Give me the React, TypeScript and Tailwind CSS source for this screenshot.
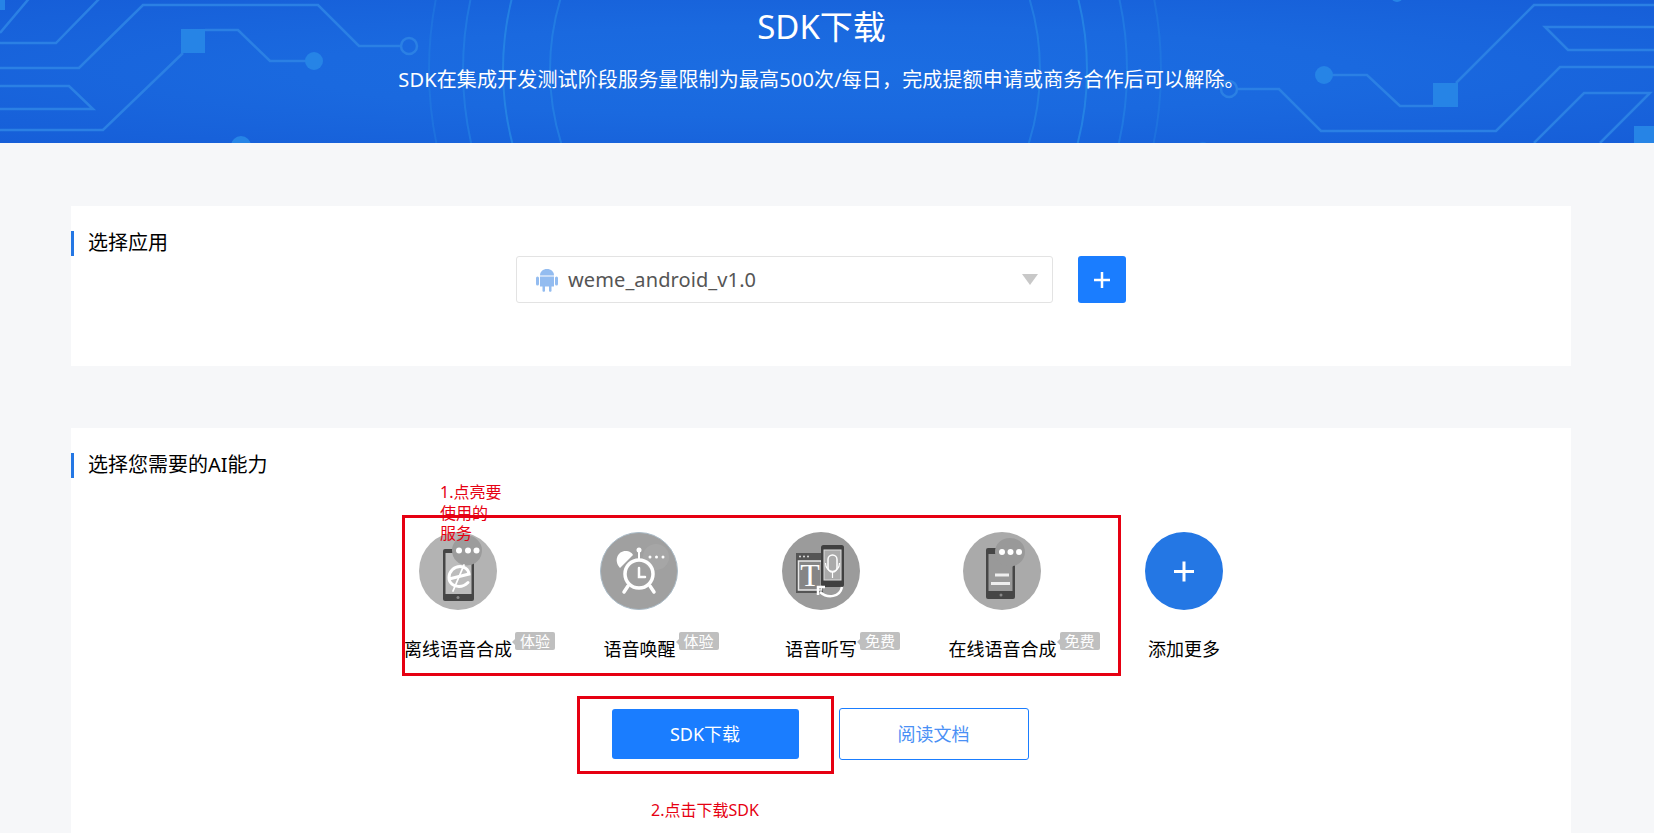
const CIRCUIT = "#2b80e4";

function BannerArt() {
  return (
    <svg className="absolute inset-0 h-full w-full" viewBox="0 0 1654 143" fill="none" aria-hidden="true">
      <g stroke="#2a8de6" strokeOpacity="0.55" strokeWidth="2">
        <circle cx="795" cy="70" r="245" />
        <circle cx="795" cy="70" r="292" strokeOpacity="0.7" />
        <circle cx="795" cy="70" r="332" strokeOpacity="0.45" />
        <circle cx="795" cy="70" r="366" strokeOpacity="0.3" />
      </g>
      <g stroke={CIRCUIT} strokeWidth="2.500">
        <path d="M0 68H79L143 5H318L359 46H401" />
        <circle cx="409" cy="46" r="8" />
        <path d="M0 43H56L100 -2" />
        <path d="M0 33L32 -5" />
        <path d="M205 30H238L270 61H307" />
        <path d="M183 53L103 130H0" />
        <path d="M0 86H69L93 109H0" />
        <circle cx="1229" cy="89" r="8" />
        <path d="M1237 89H1279L1321 131H1496L1560 67H1654" />
        <path d="M1324 75H1367L1400 106H1433" />
        <path d="M1456 83L1534 5H1654" />
        <path d="M1654 27H1545L1568 50H1654" />
        <path d="M1534 143L1584 93H1650L1600 143" />
      </g>
      <g fill="#2684e6">
        <rect x="181" y="29" width="24" height="24" />
        <circle cx="314" cy="61" r="9" />
        <circle cx="241" cy="146" r="10" />
        <rect x="0" y="0" width="5" height="10" />
        <circle cx="1324" cy="75" r="9" />
        <rect x="1433" y="83" width="25" height="24" />
        <rect x="1634" y="126" width="20" height="17" />
        <circle cx="1397" cy="-4" r="6" />
        <circle cx="1203" cy="150" r="8" fillOpacity="0.5" />
      </g>
    </svg>
  );
}

function AndroidIcon() {
  return (
    <svg width="22" height="24" viewBox="0 0 22 24" fill="#93bcf0" aria-hidden="true">
      <path d="M4 7.500C4 3.500 7 1 11 1C15 1 18 3.500 18 7.500Z" />
      <path d="M4 8.500H18V18.500H15.500V23C15.500 24 13 24 13 23V18.500H9V23C9 24 6.500 24 6.500 23V18.500H4Z" />
      <rect x="0" y="8.500" width="3" height="9" rx="1.500" />
      <rect x="19" y="8.500" width="3" height="9" rx="1.500" />
    </svg>
  );
}

function OfflineIcon() {
  return (
    <svg width="78" height="78" viewBox="0 0 78 78" aria-hidden="true">
      <circle cx="39" cy="39" r="39" fill="#b3b3b3" />
      <rect x="24" y="17" width="31" height="52" rx="2" fill="#464646" />
      <rect x="26.500" y="21" width="26" height="41" fill="#bcbcbc" />
      <circle cx="39" cy="65.500" r="1.500" fill="#8a8a8a" />
      <circle cx="48" cy="18.500" r="15" fill="#9c9c9c" />
      <circle cx="40" cy="18.500" r="3" fill="#fff" />
      <circle cx="49" cy="18.500" r="3" fill="#fff" />
      <circle cx="57.500" cy="18.500" r="3" fill="#fff" />
      <g fill="none" stroke="#fff" strokeWidth="3" strokeLinecap="round">
        <path d="M30 47L50 42C49.500 37 45 34.500 41 34.500C35 34.500 30 39.500 30 45.500C30 51 34.500 54.500 40 54.500C43.500 54.500 46.500 53 49 50.500" />
        <path d="M34 59L45 33" strokeWidth="1.800" />
      </g>
    </svg>
  );
}

function AlarmIcon() {
  return (
    <svg width="78" height="78" viewBox="0 0 78 78" aria-hidden="true">
      <circle cx="39" cy="39" r="38.500" fill="#a0a0a0" stroke="#a9bac6" strokeWidth="1" />
      <circle cx="56" cy="25" r="13" fill="#a6a6a6" />
      <circle cx="50" cy="25" r="1.500" fill="#fff" />
      <circle cx="56.500" cy="25" r="1.500" fill="#fff" />
      <circle cx="63" cy="25" r="1.500" fill="#fff" />
      <g fill="none" stroke="#fff" strokeWidth="3.500" strokeLinecap="round">
        <circle cx="39" cy="42" r="14" />
        <path d="M39 20V27" strokeWidth="2" />
        <path d="M39 36V45H45" strokeWidth="2.500" />
        <path d="M28 54L24 60" />
        <path d="M50 54L54 60" />
      </g>
      <circle cx="39" cy="18" r="2.500" fill="#fff" />
      <path d="M20 36C13 28 18 18 27 19C30 19.500 32 21 33 23Z" fill="#fff" />
    </svg>
  );
}

function DictationIcon() {
  return (
    <svg width="78" height="78" viewBox="0 0 78 78" aria-hidden="true">
      <circle cx="39" cy="39" r="39" fill="#9b9b9b" />
      <rect x="14" y="21" width="27" height="40" fill="#555" />
      <circle cx="18" cy="24.500" r="1" fill="#ddd" />
      <circle cx="22" cy="24.500" r="1" fill="#ddd" />
      <circle cx="26" cy="24.500" r="1" fill="#ddd" />
      <rect x="16.500" y="29" width="23" height="29" fill="#858585" stroke="#e8e8e8" strokeWidth="1.500" />
      <text x="28" y="54" textAnchor="middle" fontFamily="'Liberation Serif', serif" fontSize="32" fill="#fff">
        T
      </text>
      <rect x="39" y="13" width="23" height="42" rx="2.500" fill="#404040" />
      <rect x="42" y="18" width="17" height="30" fill="#aaa" stroke="#ddd" strokeWidth="1" />
      <rect x="46" y="23" width="9" height="17" rx="4.500" fill="none" stroke="#fff" strokeWidth="1.500" />
      <path d="M43.500 31C43.500 42 57.500 42 57.500 31M50.500 40V46" fill="none" stroke="#fff" strokeWidth="1.200" />
      <g fill="none" stroke="#fff" strokeWidth="2.500">
        <path d="M60 55C58 65 46 67 38 60" />
        <path d="M43 55H36V63" />
      </g>
    </svg>
  );
}

function OnlineIcon() {
  return (
    <svg width="78" height="78" viewBox="0 0 78 78" aria-hidden="true">
      <circle cx="39" cy="39" r="39" fill="#aaaaaa" />
      <rect x="23" y="16" width="29" height="51" rx="2" fill="#464646" />
      <rect x="25.500" y="22" width="24" height="37" fill="#999" />
      <circle cx="38" cy="63" r="1.500" fill="#888" />
      <path d="M47 6C38.500 6 32 12 32 20C32 28 38.500 34 45 34L47 37L50 34C56.500 33 62 27 62 20C62 12 55.500 6 47 6Z" fill="#999" />
      <circle cx="39" cy="20" r="3" fill="#fff" />
      <circle cx="47.500" cy="20" r="3" fill="#fff" />
      <circle cx="56" cy="20" r="3" fill="#fff" />
      <rect x="32" y="41.500" width="14" height="3" fill="#eee" />
      <rect x="28" y="50" width="19" height="3" fill="#eee" />
    </svg>
  );
}

function AddIcon() {
  return (
    <svg width="78" height="78" viewBox="0 0 78 78" aria-hidden="true">
      <circle cx="39" cy="39" r="39" fill="#2477e4" />
      <path d="M39 29.500V49.500M29 39.500H49" stroke="#fff" strokeWidth="3" />
    </svg>
  );
}

const abilities = [
  { name: "离线语音合成", tag: "体验", icon: <OfflineIcon /> },
  { name: "语音唤醒", tag: "体验", icon: <AlarmIcon /> },
  { name: "语音听写", tag: "免费", icon: <DictationIcon /> },
  { name: "在线语音合成", tag: "免费", icon: <OnlineIcon /> },
  { name: "添加更多", tag: "", icon: <AddIcon /> },
];

function SectionTitle({ children }: { children: string }) {
  return (
    <h2 className="h-[25px] border-l-[3px] border-[#2477e4] pl-[14px] text-[20px] leading-[24px] font-normal text-black">
      {children}
    </h2>
  );
}

export default function App() {
  return (
    <div className="h-[833px] overflow-hidden bg-[#f6f7f9] font-['Noto_Sans','Noto_Sans_CJK_SC',sans-serif]">
      <header className="relative h-[143px] overflow-hidden bg-[radial-gradient(ellipse_at_center,#1b6de2_0%,#1a69df_45%,#165ed8_100%)] text-center text-white">
        <BannerArt />
        <div className="relative pr-[11px]">
          <h1 className="pt-[5px] text-[33px] leading-[44px] font-normal">SDK下载</h1>
          <p className="mt-[17px] text-[20px] leading-[28px] tracking-[0.15px]">
            SDK在集成开发测试阶段服务量限制为最高500次/每日，完成提额申请或商务合作后可以解除。
          </p>
        </div>
      </header>

      <main className="pt-[63px] pr-[83px] pl-[71px]">
        <section className="h-[160px] bg-white pt-[25px]">
          <SectionTitle>选择应用</SectionTitle>
          <div className="flex justify-center gap-[25px]">
            <div className="flex h-[47px] w-[537px] items-center rounded-[3px] border border-[#e3e3e3] pr-[14px] pl-[19px] text-[20px] text-[#555]">
              <AndroidIcon />
              <span className="ml-[10px] flex-1 tracking-[0.1px]">weme_android_v1.0</span>
              <span className="h-0 w-0 border-x-[8px] border-t-[11px] border-x-transparent border-t-[#c8c8c8]" />
            </div>
            <button className="flex h-[47px] w-[48px] items-center justify-center rounded-[3px] bg-[#1a7dff]">
              <svg width="16" height="16" viewBox="0 0 16 16" aria-hidden="true">
                <path d="M8 0V16M0 8H16" stroke="#fff" strokeWidth="2.500" />
              </svg>
            </button>
          </div>
        </section>

        <section className="relative mt-[62px] h-[500px] bg-white pt-[25px]">
          <SectionTitle>选择您需要的AI能力</SectionTitle>

          <div className="mt-[54px] flex justify-center pr-[1px]">
            {abilities.map((item) => (
              <div key={item.name} className="flex w-[181.500px] flex-col items-center">
                {item.icon}
                <span className="relative mt-[26px] ml-[1px] text-[18px] leading-[26px] whitespace-nowrap text-black">
                  {item.name}
                  {item.tag && (
                    <span className="absolute top-[-4px] left-[calc(100%+3px)] flex h-[18px] w-[40px] items-center justify-center rounded-[2px] bg-[#bfbfbf] text-[15px] leading-none text-white before:absolute before:top-[7px] before:left-[-3px] before:h-0 before:w-0 before:border-y-[3px] before:border-r-[3px] before:border-y-transparent before:border-r-[#bfbfbf]">
                      {item.tag}
                    </span>
                  )}
                </span>
              </div>
            ))}
          </div>

          <div className="mt-[46px] flex items-center justify-center gap-[40px] pr-[2px]">
            <button className="h-[50px] w-[187px] rounded-[3px] bg-[#1a7dff] text-[18px] text-white">SDK下载</button>
            <button className="h-[52px] w-[190px] rounded-[3px] border border-[#1a7dff] text-[18px] text-[#4a90f5]">
              阅读文档
            </button>
          </div>

          <p className="absolute top-[54px] left-[369px] w-[62px] text-[16px] leading-[20.500px] text-[#e60012]">
            1.点亮要使用的服务
          </p>
          <div className="absolute top-[87px] left-[331px] h-[161px] w-[719px] border-[3px] border-[#e60012]" />
          <div className="absolute top-[268px] left-[506px] h-[78px] w-[257px] border-[3px] border-[#e60012]" />
          <p className="absolute top-[371px] left-[580px] text-[16px] leading-[22px] text-[#e60012]">2.点击下载SDK</p>
        </section>
      </main>
    </div>
  );
}
